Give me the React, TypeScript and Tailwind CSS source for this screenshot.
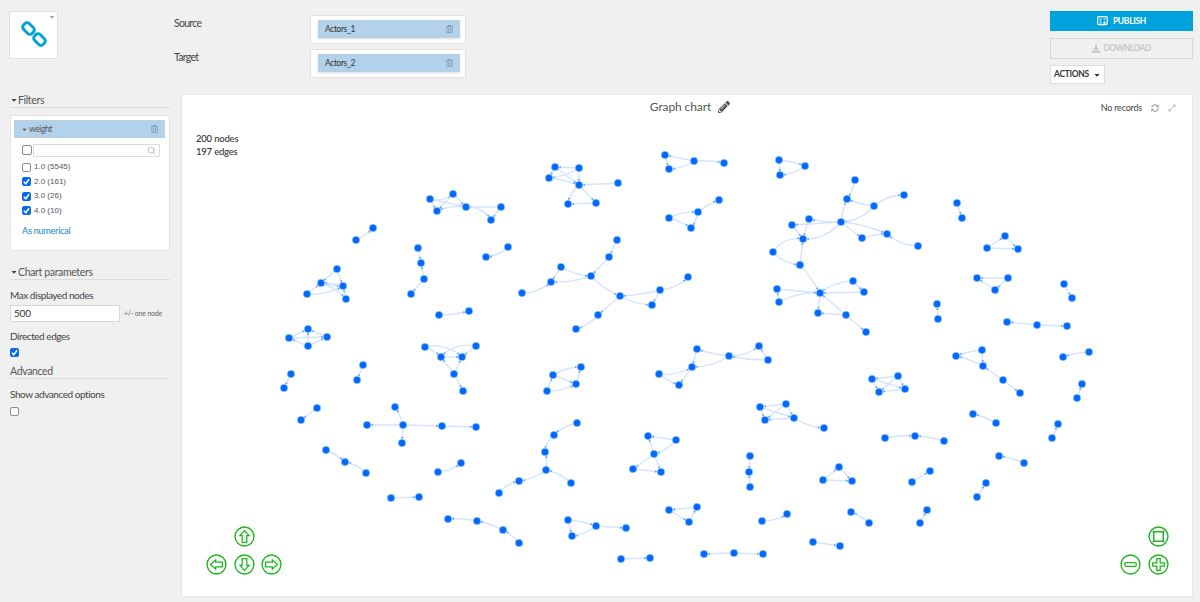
import { Search } from "lucide-react";
import { FaCaretDown, FaDownload, FaExpandAlt, FaPencilAlt, FaRegTrashAlt, FaSyncAlt } from "react-icons/fa";

type Pt = [number, number];
type Cluster = { n: Pt[]; e: number[][] };

// edge = [from, to, bend]
const CLUSTERS: Cluster[] = [
  { n: [[430, 199], [453, 194], [437, 211], [466, 207], [501, 207], [491, 220]], e: [[0, 1, 3], [0, 2], [0, 3], [1, 2], [1, 3], [3, 2, 2], [4, 3], [3, 5, -4], [4, 5]] },
  { n: [[555, 167], [579, 168], [549, 178], [579, 185], [618, 183], [568, 204], [596, 203]], e: [[1, 0], [0, 2], [1, 2, -2], [0, 3], [2, 3, -1], [1, 3], [4, 3], [3, 5, 2], [3, 6], [6, 5]] },
  { n: [[356, 240], [373, 228]], e: [[0, 1, 1]] },
  { n: [[418, 248], [421, 263], [424, 279], [411, 294]], e: [[0, 1], [2, 1], [2, 3]] },
  { n: [[486, 257], [508, 247]], e: [[1, 0, -2]] },
  { n: [[337, 269], [321, 283], [343, 286], [307, 294], [346, 299]], e: [[0, 1], [0, 2], [1, 2, 1], [2, 1, 1], [3, 1], [3, 2, 3], [1, 4, -2], [4, 2]] },
  { n: [[439, 315], [469, 311]], e: [[0, 1, 1]] },
  { n: [[289, 338], [308, 329], [327, 337], [308, 346]], e: [[0, 1], [2, 1], [0, 2], [3, 1], [3, 0], [3, 2]] },
  { n: [[617, 240], [609, 257], [561, 267], [591, 276], [551, 282], [522, 293], [620, 296], [660, 290], [652, 305], [598, 315], [576, 329], [688, 277]], e: [[0, 1], [1, 3], [2, 3, 2], [2, 4], [3, 4, -2], [5, 4, 3], [3, 6, 2], [7, 6, -1], [6, 8, 2], [7, 8], [6, 9], [9, 10, -2], [7, 11, 3]] },
  { n: [[425, 347], [441, 357], [476, 346], [462, 357], [454, 374], [463, 391]], e: [[0, 1, -1], [0, 3, -5], [2, 3], [2, 1, 5], [1, 3], [4, 1], [4, 3], [4, 5]] },
  { n: [[665, 155], [694, 161], [669, 169], [724, 163]], e: [[1, 0], [0, 2], [1, 2, -2], [1, 3, -1]] },
  { n: [[779, 160], [805, 166], [780, 175]], e: [[0, 1, -1], [1, 2, -2], [0, 2]] },
  { n: [[669, 218], [698, 212], [719, 200], [691, 228]], e: [[0, 1, -2], [0, 3, -1], [1, 2, -1], [1, 3, -1]] },
  { n: [[855, 180], [847, 199], [874, 206], [904, 195], [841, 222], [809, 219], [792, 225], [803, 239], [862, 238], [887, 234], [918, 246], [773, 252], [800, 265]], e: [[0, 1, -1], [2, 1, -1], [2, 3, -3], [2, 4, -4], [4, 1, -1], [4, 5, -1], [4, 6], [4, 7, -5], [4, 8], [4, 9, -2], [8, 9, -1], [10, 9, -3], [6, 7], [5, 7], [11, 7, -5], [11, 12, 3], [12, 7]] },
  { n: [[800, 265], [820, 293], [777, 289], [779, 302], [853, 281], [864, 292], [818, 313], [846, 315], [866, 332]], e: [[0, 1, -1], [2, 1, 0], [3, 1, -3], [3, 2], [4, 1, 3], [4, 5], [5, 1], [1, 6], [7, 6], [7, 1], [7, 8]] },
  { n: [[957, 203], [962, 218]], e: [[0, 1]] },
  { n: [[1005, 236], [987, 248], [1018, 249]], e: [[1, 0], [0, 2], [1, 2]] },
  { n: [[1008, 278], [977, 278], [995, 290]], e: [[0, 1], [0, 2], [2, 1]] },
  { n: [[937, 304], [938, 319]], e: [[1, 0]] },
  { n: [[1064, 284], [1072, 298]], e: [[0, 1]] },
  { n: [[1007, 322], [1037, 325], [1067, 326]], e: [[1, 0], [1, 2]] },
  { n: [[697, 349], [729, 356], [759, 346], [768, 360], [692, 367], [659, 374], [679, 385]], e: [[1, 0, -1], [1, 2, 3], [3, 2], [3, 1, -1], [1, 4, -3], [0, 4], [5, 4, 3], [5, 6, 1], [4, 6]] },
  { n: [[956, 356], [982, 350], [983, 366], [1003, 380], [1020, 393]], e: [[1, 0, 1], [1, 2], [2, 0, 1], [3, 2], [3, 4]] },
  { n: [[1063, 357], [1089, 352]], e: [[1, 0, 1]] },
  { n: [[1082, 384], [1077, 398]], e: [[1, 0]] },
  { n: [[872, 379], [898, 376], [905, 389], [879, 392]], e: [[1, 0], [1, 2], [0, 2], [1, 3], [0, 3], [2, 3]] },
  { n: [[760, 407], [786, 404], [794, 418], [765, 420], [824, 428]], e: [[1, 0], [1, 2], [1, 3], [0, 2], [0, 3], [2, 3], [2, 4, 2]] },
  { n: [[973, 414], [996, 423]], e: [[1, 0, 1]] },
  { n: [[1058, 424], [1052, 438]], e: [[1, 0]] },
  { n: [[885, 438], [915, 436], [944, 441]], e: [[0, 1, -1], [2, 1, 1]] },
  { n: [[999, 456], [1024, 463]], e: [[1, 0, 1]] },
  { n: [[986, 483], [977, 497]], e: [[1, 0]] },
  { n: [[750, 456], [749, 472], [750, 487]], e: [[0, 1], [2, 1]] },
  { n: [[839, 467], [823, 480], [852, 481]], e: [[1, 0], [0, 2], [1, 2]] },
  { n: [[930, 471], [912, 482]], e: [[1, 0]] },
  { n: [[927, 510], [920, 523]], e: [[1, 0]] },
  { n: [[851, 512], [869, 523]], e: [[1, 0, 1]] },
  { n: [[787, 514], [762, 521]], e: [[1, 0, 2]] },
  { n: [[813, 542], [840, 546]], e: [[0, 1]] },
  { n: [[704, 554], [734, 553], [763, 554]], e: [[1, 0], [1, 2]] },
  { n: [[669, 510], [697, 507], [689, 522]], e: [[1, 0], [0, 2], [2, 1]] },
  { n: [[291, 374], [284, 388]], e: [[0, 1]] },
  { n: [[363, 365], [357, 380]], e: [[0, 1]] },
  { n: [[553, 375], [581, 367], [576, 384], [547, 391]], e: [[0, 1, -2], [0, 2], [2, 1], [3, 0], [3, 2, 2]] },
  { n: [[317, 408], [301, 420]], e: [[0, 1]] },
  { n: [[395, 407], [403, 425], [367, 425], [402, 443], [442, 426], [476, 427]], e: [[1, 0, 1], [1, 2], [1, 3], [1, 4], [4, 5]] },
  { n: [[577, 423], [554, 435], [545, 452], [546, 470], [571, 483], [519, 481], [499, 493]], e: [[0, 1, 2], [1, 2, 2], [3, 2, 1], [4, 3, 2], [3, 5, -2], [6, 5, -2]] },
  { n: [[648, 436], [676, 440], [654, 454], [633, 469], [661, 472]], e: [[1, 0], [2, 0], [1, 2, -2], [2, 3], [2, 4], [3, 4]] },
  { n: [[326, 450], [345, 462], [366, 473]], e: [[0, 1, -1], [2, 1, 2]] },
  { n: [[438, 472], [461, 463]], e: [[0, 1, 2]] },
  { n: [[391, 498], [419, 497]], e: [[0, 1]] },
  { n: [[448, 519], [477, 521], [503, 530], [519, 543]], e: [[1, 0, 1], [2, 1, 1], [3, 2, 1]] },
  { n: [[568, 520], [596, 526], [626, 528], [572, 536]], e: [[0, 1, -1], [1, 2], [0, 3], [1, 3, -2]] },
  { n: [[621, 559], [650, 558]], e: [[0, 1]] },
];

function GraphEdge({ a, b, bend }: { a: Pt; b: Pt; bend: number }) {
  const dx = b[0] - a[0];
  const dy = b[1] - a[1];
  const len = Math.hypot(dx, dy) || 1;
  const cx = (a[0] + b[0]) / 2 - (dy / len) * bend * 2;
  const cy = (a[1] + b[1]) / 2 + (dx / len) * bend * 2;
  // arrow sits just outside the target node, pointing along the curve's end
  const tx = b[0] - cx;
  const ty = b[1] - cy;
  const tl = Math.hypot(tx, ty) || 1;
  const ux = tx / tl;
  const uy = ty / tl;
  const px = b[0] - ux * 3.5;
  const py = b[1] - uy * 3.5;
  const bx = px - ux * 2.5;
  const by = py - uy * 2.5;
  return (
    <g>
      <path d={`M${a[0]} ${a[1]} Q${cx} ${cy} ${b[0]} ${b[1]}`} fill="none" stroke="#d3e4fc" strokeWidth="1.4" />
      <polygon points={`${px},${py} ${bx - uy * 1.3},${by + ux * 1.3} ${bx + uy * 1.3},${by - ux * 1.3}`} fill="#6aa6f7" />
    </g>
  );
}

function GraphCanvas() {
  return (
    <svg className="absolute inset-0" width="1010" height="501" viewBox="182 95 1010 501">
      {CLUSTERS.map((c, i) => (
        <g key={i}>
          {c.e.map((e, j) => (
            <GraphEdge key={j} a={c.n[e[0]]} b={c.n[e[1]]} bend={e[2] ?? 0} />
          ))}
          {c.n.map((p, j) => (
            <circle key={j} cx={p[0]} cy={p[1]} r="3.8" fill="#0069fb" stroke="#bcd8ff" strokeWidth="0.6" />
          ))}
        </g>
      ))}
    </svg>
  );
}

const ARROW = "M10 4.4 L14.4 9.2 H12.2 V15.6 H7.8 V9.2 H5.6 Z";

function NavButton({ rotate = 0, children }: { rotate?: number; children?: React.ReactNode }) {
  return (
    <svg width="21" height="21" viewBox="0 0 20 20">
      <circle cx="10" cy="10" r="9" fill="white" stroke="#1cb81c" strokeWidth="1.3" />
      {children ?? <path d={ARROW} fill="white" stroke="#1cb81c" strokeWidth="1.2" transform={`rotate(${rotate} 10 10)`} />}
    </svg>
  );
}

function Check({ on, className = "" }: { on?: boolean; className?: string }) {
  return (
    <span
      className={`flex shrink-0 items-center justify-center w-[9px] h-[9px] rounded-[2px] border ${
        on ? "bg-[#0a67f2] border-[#0a67f2]" : "bg-white border-[#8c8c8c]"
      } ${className}`}
    >
      {on && (
        <svg width="7" height="7" viewBox="0 0 8 8">
          <path d="M1 4.4 L3.1 6.6 L7 1.4" fill="none" stroke="white" strokeWidth="1.7" />
        </svg>
      )}
    </span>
  );
}

function SectionTitle({ caret, label }: { caret?: boolean; label: string }) {
  return (
    <div className="flex items-center h-[13px] pb-[2px] border-b border-[#dcdcdc] text-[10.5px] tracking-[-0.35px] leading-[11px] text-[#555]">
      {caret && <FaCaretDown className="w-[8px] h-[8px] text-[#444]" />}
      {label}
    </div>
  );
}

function DatasetBox({ label, name }: { label: string; name: string }) {
  return (
    <div className="flex items-start">
      <div className="w-[136px] pt-[1px] text-[10.5px] tracking-[-0.7px] leading-[14px] text-[#444]">{label}</div>
      <div className="w-[156px] h-[29px] bg-white border border-[#e2e2e2] pl-[7px] pr-[5px] pt-[4px]">
        <div className="flex items-center justify-between h-[18px] bg-[#b3d2ea] pl-[7px] pr-[7px] text-[8.5px] tracking-[-0.4px] text-[#333] shadow-sm">
          {name}
          <FaRegTrashAlt className="w-[7px] h-[8px] text-[#7c93a6]" />
        </div>
      </div>
    </div>
  );
}

const FILTER_VALUES = [
  { label: "1.0 (5545)", on: false },
  { label: "2.0 (161)", on: true },
  { label: "3.0 (26)", on: true },
  { label: "4.0 (10)", on: true },
];

const fieldLabel = "text-[10px] tracking-[-0.45px] leading-[13px] text-[#444]";

export default function App() {
  return (
    <div className="w-[1200px] h-[602px] overflow-hidden bg-[#f0f0f0] font-['Lato',sans-serif]">
      <div className="flex h-[94px]">
        <div className="relative flex items-center justify-center ml-[9px] mt-[11px] w-[49px] h-[48px] bg-white border border-[#e0e0e0]">
          <svg width="30" height="30" viewBox="0 0 30 30">
            <rect x="3.5" y="4.5" width="12" height="8" rx="3" fill="none" stroke="#00a3d9" strokeWidth="3" transform="rotate(45 9.5 8.5)" />
            <rect x="14.5" y="15.5" width="12" height="8" rx="3" fill="none" stroke="#00a3d9" strokeWidth="3" transform="rotate(45 20.5 19.5)" />
          </svg>
          <FaCaretDown className="absolute top-[1px] right-[1px] w-[8px] h-[8px] text-[#aaa]" />
        </div>
        <div className="ml-[116px] pt-[15px] flex flex-col gap-[5px]">
          <DatasetBox label="Source" name="Actors_1" />
          <DatasetBox label="Target" name="Actors_2" />
        </div>
        <div className="ml-auto mr-[7px] w-[143px] pt-[11px] flex flex-col items-start">
          <button className="flex items-center justify-center gap-[5px] w-full h-[20px] bg-[#00a2db] text-white text-[8.5px] tracking-[-0.3px] font-bold">
            <svg width="11" height="10" viewBox="0 0 11 10">
              <rect x="0.6" y="0.6" width="9.6" height="8" rx="1.2" fill="none" stroke="white" strokeWidth="1.2" />
              <path d="M2.5 3h2M2.5 5h2M2.5 7h2M6.5 3h2M7.5 5v4M5.8 7h3.4" stroke="white" strokeWidth="1" />
            </svg>
            PUBLISH
          </button>
          <button className="flex items-center justify-center gap-[3px] w-full h-[21px] mt-[7px] border border-[#d6d6d6] text-[#c8c8c8] text-[8.5px] tracking-[-0.6px] font-bold">
            <FaDownload className="w-[8px] h-[8px]" />
            DOWNLOAD
          </button>
          <button className="flex items-center justify-center gap-[4px] w-[55px] h-[19px] mt-[6px] bg-white border border-[#dedede] text-[#333] text-[8.5px] tracking-[-0.3px] font-bold">
            ACTIONS
            <FaCaretDown className="w-[8px] h-[8px]" />
          </button>
        </div>
      </div>

      <div className="flex">
        <div className="w-[181px] pt-[1px] pl-[10px] pr-[11px] text-[#555]">
          <SectionTitle caret label="Filters" />
          <div className="mt-[7px] h-[136px] bg-white border border-[#e2e2e2] pl-[3px] pr-[4px] pt-[4px]">
            <div className="flex items-center justify-between h-[18px] bg-[#b3d2ea] pl-[7px] pr-[7px] text-[8.5px] tracking-[-0.4px] text-[#555]">
              <span className="flex items-center">
                <FaCaretDown className="w-[7px] h-[7px] mr-[1px]" />
                weight
              </span>
              <FaRegTrashAlt className="w-[7px] h-[8px] text-[#7c93a6]" />
            </div>
            <div className="flex items-center mt-[6px] ml-[8px]">
              <Check className="!w-[10px] !h-[10px] -mt-[2px]" />
              <div className="flex items-center justify-end w-[127px] h-[13px] ml-[1px] bg-white border border-[#dcdcdc] pr-[3px]">
                <Search className="w-[9px] h-[9px] text-[#aaa]" />
              </div>
            </div>
            <div className="flex flex-col gap-[4.5px] mt-[5px] ml-[8px]">
              {FILTER_VALUES.map(v => (
                <div key={v.label} className="flex items-center gap-[3px] h-[10px] font-['Liberation_Sans',sans-serif] text-[8px] text-[#555]">
                  <Check on={v.on} />
                  {v.label}
                </div>
              ))}
            </div>
            <div className="mt-[9px] ml-[8px] text-[9px] tracking-[-0.2px] leading-[12px] text-[#0d88cc]">As numerical</div>
          </div>

          <div className="mt-[16px]">
            <SectionTitle caret label="Chart parameters" />
          </div>
          <div className={`mt-[9px] ${fieldLabel}`}>Max displayed nodes</div>
          <div className="flex items-center mt-[3px]">
            <div className="flex items-center w-[110px] h-[17px] bg-white border border-[#d6d6d6] pl-[3px] text-[10px] tracking-[-0.2px] text-[#333]">500</div>
            <span className="ml-[4px] text-[7px] tracking-[-0.2px] text-[#666]">+/- one node</span>
          </div>
          <div className={`mt-[8px] ${fieldLabel}`}>Directed edges</div>
          <Check on className="mt-[5px]" />
          <div className="mt-[9px]">
            <SectionTitle label="Advanced" />
          </div>
          <div className={`mt-[9px] ${fieldLabel}`}>Show advanced options</div>
          <Check className="mt-[6px]" />
        </div>

        <div className="relative w-[1012px] h-[503px] bg-white border border-[#e6e6e6]">
          <GraphCanvas />
          <div className="relative flex items-center justify-center h-[24px] pl-[6px] gap-[7px] text-[12px] tracking-[-0.1px] text-[#555]">
            Graph chart
            <FaPencilAlt className="w-[12px] h-[12px] text-[#555]" />
            <div className="absolute right-[16px] top-[6px] flex items-center text-[9px] tracking-[-0.2px] text-[#444]">
              No records
              <FaSyncAlt className="ml-[9px] w-[8px] h-[8px] text-[#aaa]" />
              <FaExpandAlt className="ml-[9px] w-[8px] h-[8px] text-[#bbb]" />
            </div>
          </div>
          <div className="relative ml-[14px] mt-[13px] text-[9.5px] tracking-[-0.2px] leading-[13px] text-[#333] font-medium">
            <div>200 nodes</div>
            <div>197 edges</div>
          </div>
          <div className="absolute left-[24px] bottom-[21px] grid grid-cols-[21px_21px_21px] gap-x-[6.5px] gap-y-[7px]">
            <span />
            <NavButton />
            <span />
            <NavButton rotate={-90} />
            <NavButton rotate={180} />
            <NavButton rotate={90} />
          </div>
          <div className="absolute right-[23px] bottom-[21px] grid grid-cols-[21px_21px] gap-x-[7px] gap-y-[7px]">
            <span />
            <NavButton>
              <g>
                <rect x="5.5" y="5.5" width="9" height="9" fill="white" stroke="#1cb81c" strokeWidth="1.4" />
                <path d="M4.2 4.2h2v2h-2zM13.8 4.2h2v2h-2zM4.2 13.8h2v2h-2zM13.8 13.8h2v2h-2z" fill="#888" />
              </g>
            </NavButton>
            <NavButton>
              <rect x="4.5" y="8.3" width="11" height="3.4" rx="1.2" fill="white" stroke="#1cb81c" strokeWidth="1.2" />
            </NavButton>
            <NavButton>
              <path d="M8.4 4.5h3.2v3.9h3.9v3.2h-3.9v3.9h-3.2v-3.9h-3.9v-3.2h3.9z" fill="white" stroke="#1cb81c" strokeWidth="1.2" />
            </NavButton>
          </div>
        </div>
      </div>
    </div>
  );
}
